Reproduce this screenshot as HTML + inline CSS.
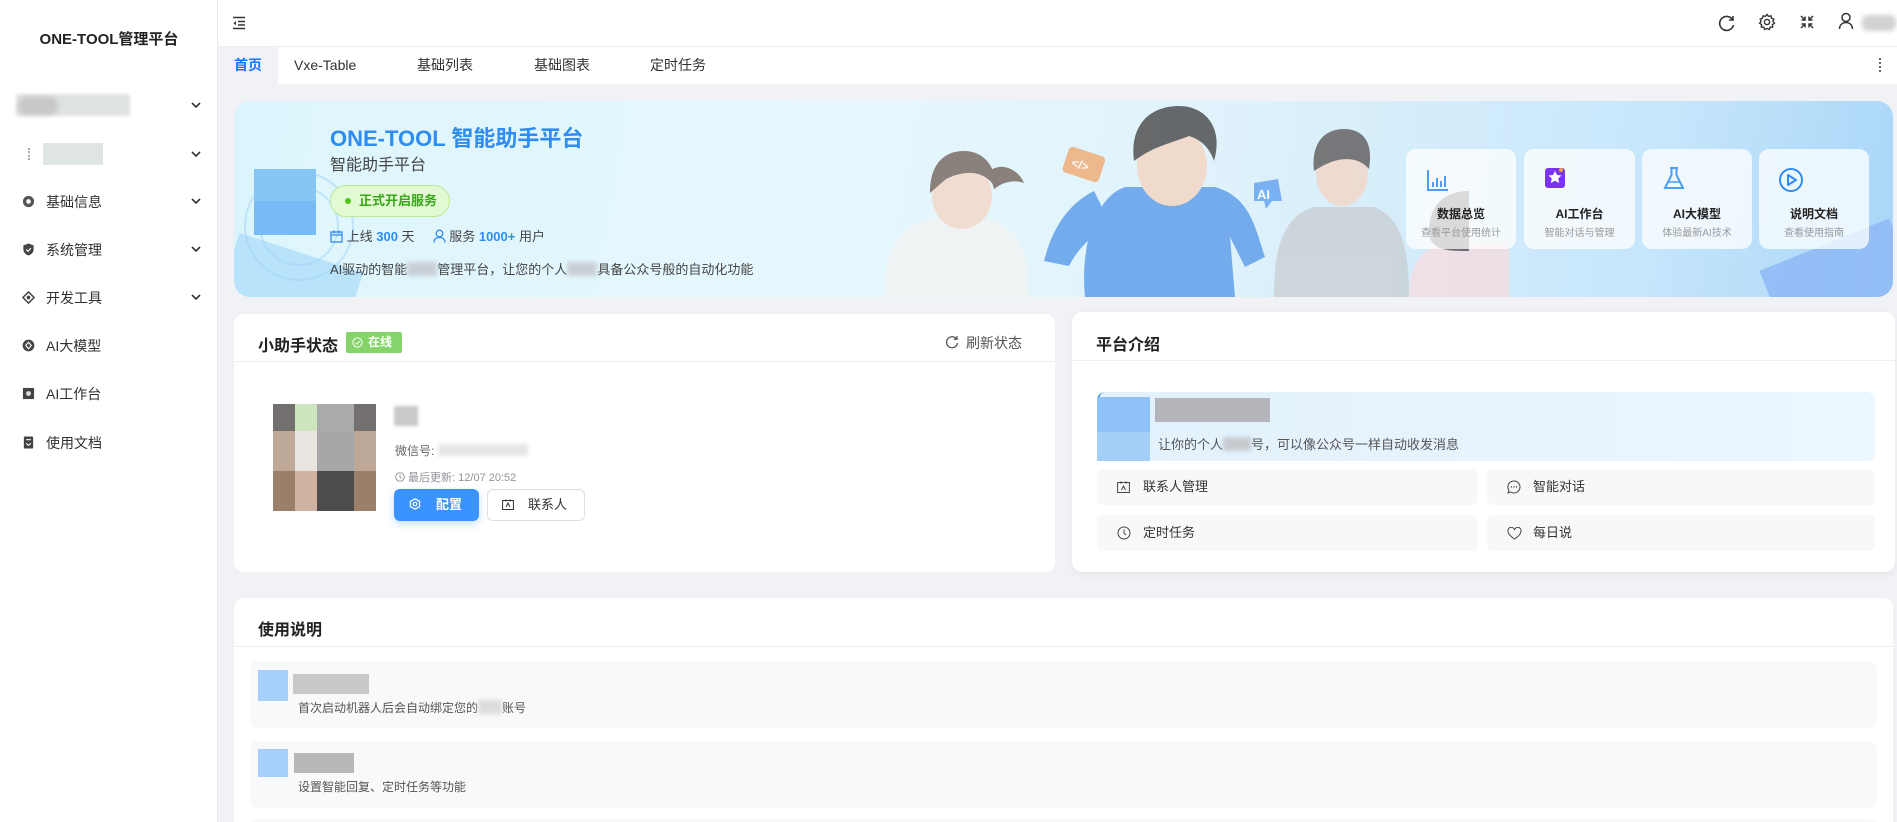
<!DOCTYPE html>
<html style="width:1897px;height:822px;overflow:hidden"><head><meta charset="utf-8">
<style>
*{box-sizing:border-box;margin:0;padding:0}
body{width:1897px;height:822px;overflow:hidden;background:#f0f2f5;font-family:"Liberation Sans","Noto Sans CJK SC",sans-serif;color:#303133;position:relative}
.abs{position:absolute}
.side{left:0;top:0;width:218px;height:822px;background:#fff;border-right:1px solid #e8eaef}
.logo{left:0;top:28px;width:218px;text-align:center;font-size:15px;font-weight:bold;color:#222}
.mi{left:0;width:218px;height:40px;font-size:14px;color:#303133;display:flex;align-items:center}
.mi .ic{position:absolute;left:22px;top:13px;width:13px;height:13px}
.mi .tx{position:absolute;left:46px}
.mi .ch{position:absolute;left:190px;top:14px}
.hdr{left:218px;top:0;right:0;height:47px;background:#fff;border-bottom:1px solid #eceef2}
.tabs{left:218px;top:47px;right:0;height:37px;background:#fff}
.tab{top:0;height:37px;line-height:37px;font-size:14px;color:#303133}
.card{background:#fff;border-radius:10px}
</style></head><body>
<!-- sidebar -->
<div class="abs side">
 <div class="abs logo">ONE-TOOL管理平台</div>
 <div class="abs" style="left:16px;top:94px;width:114px;height:22px;background:#dfe3e0;filter:blur(1.5px)"></div>
 <div class="abs" style="left:18px;top:97px;width:40px;height:18px;background:#c8c8c8;border-radius:8px;filter:blur(2px)"></div>
 <svg class="abs" style="left:190px;top:100px" width="12" height="10"><path d="M2 3l4 4 4-4" stroke="#333" stroke-width="1.6" fill="none"/></svg>
 <div class="abs" style="left:28px;top:148px;width:2px;height:12px;border-left:2px dotted #aaa"></div>
 <div class="abs" style="left:43px;top:143px;width:60px;height:22px;background:#dfe5e1"></div>
 <svg class="abs" style="left:190px;top:149px" width="12" height="10"><path d="M2 3l4 4 4-4" stroke="#333" stroke-width="1.6" fill="none"/></svg>

 <div class="abs mi" style="top:182px"><svg class="ic" viewBox="0 0 14 14"><circle cx="7" cy="7" r="6" fill="#555"/><circle cx="7" cy="7" r="2.5" fill="#fff"/></svg><span class="tx">基础信息</span><svg class="ch" width="12" height="10"><path d="M2 3l4 4 4-4" stroke="#333" stroke-width="1.6" fill="none"/></svg></div>
 <div class="abs mi" style="top:230px"><svg class="ic" viewBox="0 0 14 14"><path d="M7 0.5L12.5 2.5V7C12.5 10 10 12.5 7 13.5 4 12.5 1.5 10 1.5 7V2.5Z" fill="#444"/><path d="M4.5 7l2 2 3-3.5" stroke="#fff" stroke-width="1.3" fill="none"/></svg><span class="tx">系统管理</span><svg class="ch" width="12" height="10"><path d="M2 3l4 4 4-4" stroke="#333" stroke-width="1.6" fill="none"/></svg></div>
 <div class="abs mi" style="top:278px"><svg class="ic" viewBox="0 0 14 14"><path d="M7 1L13 7 7 13 1 7Z" stroke="#444" stroke-width="1.6" fill="none"/><circle cx="7" cy="7" r="2" fill="#444"/></svg><span class="tx">开发工具</span><svg class="ch" width="12" height="10"><path d="M2 3l4 4 4-4" stroke="#333" stroke-width="1.6" fill="none"/></svg></div>
 <div class="abs mi" style="top:326px"><svg class="ic" viewBox="0 0 14 14"><circle cx="7" cy="7" r="6.3" fill="#444"/><path d="M7 3.5L10 7 7 10.5 4 7Z" stroke="#fff" stroke-width="1.2" fill="none"/></svg><span class="tx">AI大模型</span></div>
 <div class="abs mi" style="top:374px"><svg class="ic" viewBox="0 0 14 14"><rect x="1" y="1" width="12" height="12" fill="#444"/><circle cx="7" cy="7" r="2.6" fill="#ddd"/></svg><span class="tx">AI工作台</span></div>
 <div class="abs mi" style="top:423px"><svg class="ic" viewBox="0 0 14 14"><rect x="2" y="0.5" width="10" height="13" rx="1" fill="#444"/><path d="M4.5 8l2.5 2 2.5-2M4.5 4h5" stroke="#fff" stroke-width="1.2" fill="none"/></svg><span class="tx">使用文档</span></div>
</div>

<!-- header -->
<div class="abs hdr">
 <svg class="abs" style="left:14px;top:16px" width="14" height="14" viewBox="0 0 14 14"><path d="M1 1.5h12M6 5.5h7M6 9h7M1 12.5h12" stroke="#333" stroke-width="1.5"/><path d="M4 5L1.5 7.2 4 9.4Z" fill="#333"/></svg>
 <svg class="abs" style="left:1500px;top:14px" width="18" height="18" viewBox="0 0 18 18"><path d="M14.5 5.5A7 7 0 1 0 15.5 11" stroke="#333" stroke-width="1.6" fill="none"/><path d="M15 2v4h-4" stroke="#333" stroke-width="1.6" fill="none"/></svg>
 <svg class="abs" style="left:1540px;top:13px" width="18" height="18" viewBox="0 0 18 18"><path d="M9 1.5l1.6 1.9 2.4-.6.5 2.4 2.3.9-.9 2.3 1.5 1.9-2 1.3.3 2.5-2.5.1-.9 2.3-2.3-1-2.3 1-.9-2.3-2.5-.1.3-2.5-2-1.3 1.5-1.900-.9-2.3 2.3-.9.5-2.4 2.4.6Z" stroke="#333" stroke-width="1.4" fill="none"/><circle cx="9" cy="9" r="2.6" stroke="#333" stroke-width="1.4" fill="none"/></svg>
 <svg class="abs" style="left:1582px;top:15px" width="14" height="14" viewBox="0 0 14 14"><path d="M1 1l4 4M5 1.5V5H1.5M13 1l-4 4M9 1.5V5h3.5M1 13l4-4M5 12.5V9H1.5M13 13l-4-4M9 12.5V9h3.5" stroke="#333" stroke-width="1.5" fill="none"/></svg>
 <svg class="abs" style="left:1620px;top:12px" width="16" height="18" viewBox="0 0 16 18"><circle cx="8" cy="5.5" r="4" stroke="#333" stroke-width="1.5" fill="none"/><path d="M1.5 17c0-4 3-6.5 6.5-6.5s6.5 2.5 6.5 6.5" stroke="#333" stroke-width="1.5" fill="none"/></svg>
 <div class="abs" style="left:1644px;top:15px;width:34px;height:16px;background:#d2d2d2;border-radius:6px;filter:blur(2px)"></div>
</div>

<!-- tabs -->
<div class="abs tabs">
 <div class="abs tab" style="left:0;width:60px;background:#f0f2f5;color:#1677ff;font-weight:bold;text-align:center">首页</div>
 <div class="abs tab" style="left:76px">Vxe-Table</div>
 <div class="abs tab" style="left:199px">基础列表</div>
 <div class="abs tab" style="left:316px">基础图表</div>
 <div class="abs tab" style="left:432px">定时任务</div>
 <div class="abs" style="left:1661px;top:11px;width:2px;height:14px;border-left:2px dotted #666"></div>
</div>

<!-- banner -->
<div class="abs" style="left:234px;top:101px;width:1659px;height:196px;border-radius:16px;overflow:hidden;background:linear-gradient(100deg,#dcf5fc 0%,#e6f8fd 35%,#dff2fb 60%,#c6e6fb 85%,#a9d6f8 100%)">
 <div class="abs" style="left:-10px;top:150px;width:130px;height:80px;background:#a8dcf9;transform:rotate(18deg);opacity:.7"></div>
 <div class="abs" style="right:-20px;top:140px;width:140px;height:100px;background:#8db6f6;transform:rotate(-22deg);opacity:.8"></div>
 <div class="abs" style="left:10px;top:70px;width:110px;height:110px;border-radius:50%;border:2px solid rgba(160,210,245,.5)"></div>
 <div class="abs" style="left:25px;top:85px;width:80px;height:80px;border-radius:50%;border:2px solid rgba(160,210,245,.5)"></div>
 <div class="abs" style="left:20px;top:68px;width:62px;height:66px;background:#78baf5"></div>
 <div class="abs" style="left:20px;top:68px;width:62px;height:32px;background:#85c6f5"></div>
 <div class="abs" style="left:96px;top:20px;font-size:22px;font-weight:bold;color:#2f8cf0">ONE-TOOL 智能助手平台</div>
 <div class="abs" style="left:96px;top:50px;font-size:16px;color:#444">智能助手平台</div>
 <div class="abs" style="left:96px;top:84px;width:120px;height:32px;border-radius:16px;background:#e3f9d4;border:1px solid #b9eb95;font-size:13px;font-weight:bold;color:#3aa619;line-height:30px;padding-left:28px">正式开启服务<span class="abs" style="left:14px;top:12px;width:6px;height:6px;border-radius:50%;background:#52c41a"></span></div>
 <div class="abs" style="left:96px;top:125px;font-size:13px;color:#444;white-space:nowrap">
  <svg width="13" height="13" viewBox="0 0 13 13" style="vertical-align:-2px"><rect x="1" y="2" width="11" height="10" stroke="#2f8cf0" stroke-width="1.3" fill="none"/><path d="M1 5h11M4 0.5v3M9 0.5v3" stroke="#2f8cf0" stroke-width="1.3"/></svg> 上线 <b style="color:#2f8cf0">300</b> 天 &nbsp;&nbsp;&nbsp;
  <svg width="13" height="14" viewBox="0 0 13 14" style="vertical-align:-2px"><circle cx="6.5" cy="4.5" r="3.3" stroke="#2f8cf0" stroke-width="1.3" fill="none"/><path d="M1 13.5c0-3.5 2.5-5 5.5-5s5.5 1.5 5.5 5" stroke="#2f8cf0" stroke-width="1.3" fill="none"/></svg> 服务 <b style="color:#2f8cf0">1000+</b> 用户</div>
 <div class="abs" style="left:96px;top:158px;font-size:13px;color:#444;white-space:nowrap">AI驱动的智能<span style="display:inline-block;width:30px;height:14px;background:#c8d0d6;filter:blur(2px);vertical-align:-2px"></span>管理平台，让您的个人<span style="display:inline-block;width:30px;height:14px;background:#c8d0d6;filter:blur(2px);vertical-align:-2px"></span>具备公众号般的自动化功能</div>
 <!-- characters -->
 <svg class="abs" style="left:620px;top:0" width="680" height="196" viewBox="0 0 680 196">
  <g opacity=".75">
  <path d="M30 196c0-40 10-70 50-80h50c40 10 45 40 45 80Z" fill="#f3f3f1"/>
  <ellipse cx="108" cy="95" rx="30" ry="33" fill="#f5d4c3"/>
  <path d="M76 92c0-30 15-42 34-42s32 14 32 38c-8-15-25-22-50-10Z" fill="#6b5a50"/>
  <path d="M135 70c15-10 30 0 35 12-12-4-22 0-30 6Z" fill="#6b5a50"/>
  <path d="M231 196c-5-50 10-100 40-110h90c35 10 40 40 50 70l-20 10-15-30 5 60Z" fill="#4f94e8"/>
  <path d="M190 160c10-40 30-60 50-70l15 30c-15 15-30 25-40 45Z" fill="#4f94e8"/>
  <ellipse cx="318" cy="65" rx="35" ry="40" fill="#f5d2bd"/>
  <path d="M280 60c-5-40 20-55 45-55s45 20 35 55c-5-15-15-22-25-25-20 8-35 10-55 25Z" fill="#3d3a3a"/>
  <rect x="211" y="50" width="38" height="27" rx="4" fill="#f2a468" transform="rotate(18 230 63)"/>
  <text x="218" y="69" font-size="12" fill="#fff" font-family="Liberation Sans" font-weight="bold" transform="rotate(18 230 63)">&lt;/&gt;</text>
  <path d="M420 196c0-40 5-80 40-90h60c30 10 35 50 35 90Z" fill="#c9cdd2"/>
  <ellipse cx="488" cy="73" rx="26" ry="32" fill="#f5d4c3"/>
  <path d="M460 70c-3-30 12-42 30-42s30 12 25 40c-10-12-30-15-55 2Z" fill="#555050"/>
  <path d="M400 82l24-4 4 22-10 0-6 8-2-8-10 0Z" fill="#5a9cf0"/>
  <text x="403" y="98" font-size="13" fill="#fff" font-family="Liberation Sans" font-weight="bold">AI</text>
  <path d="M555 196c0-30 10-50 40-55h60v55Z" fill="#f8dce0"/>
  <path d="M575 130c0-25 15-40 40-40v60c-20 0-40 0-40-20Z" fill="#4a4545"/>
  </g>
 </svg>
 <!-- tiles -->
 <div class="abs card" style="left:1172px;top:48px;width:110px;height:100px;background:rgba(255,255,255,.75);border-radius:10px"></div>
 <div class="abs card" style="left:1290px;top:48px;width:111px;height:100px;background:rgba(255,255,255,.75);border-radius:10px"></div>
 <div class="abs card" style="left:1408px;top:48px;width:110px;height:100px;background:rgba(255,255,255,.75);border-radius:10px"></div>
 <div class="abs card" style="left:1525px;top:48px;width:110px;height:100px;background:rgba(255,255,255,.75);border-radius:10px"></div>
 <svg class="abs" style="left:1192px;top:67px" width="24" height="24" viewBox="0 0 24 24"><path d="M2 2v20h20" stroke="#4a9ff5" stroke-width="2" fill="none"/><path d="M7 19v-5M11 19v-9M15 19v-6M19 19v-11" stroke="#4a9ff5" stroke-width="2"/></svg>
 <svg class="abs" style="left:1310px;top:66px" width="22" height="22" viewBox="0 0 22 22"><rect x="1" y="1" width="20" height="20" rx="3" fill="#7b35f0"/><path d="M11 4l2 4 4.5.5-3.3 3 1 4.5-4.2-2.3-4.2 2.3 1-4.5-3.3-3L9 8Z" fill="#fff"/><circle cx="17" cy="3" r="2" fill="#f0a040"/></svg>
 <svg class="abs" style="left:1428px;top:65px" width="24" height="25" viewBox="0 0 24 25"><path d="M8 2h8M9.5 2v7L3 22h18L14.5 9V2" stroke="#4a9ff5" stroke-width="2" fill="none"/><path d="M6 16h12" stroke="#4a9ff5" stroke-width="1.6"/></svg>
 <svg class="abs" style="left:1544px;top:66px" width="26" height="26" viewBox="0 0 26 26"><circle cx="13" cy="13" r="11" stroke="#2f8cf0" stroke-width="2" fill="none"/><path d="M10 8v10l8-5Z" stroke="#2f8cf0" stroke-width="2" fill="none" stroke-linejoin="round"/></svg>
 <div class="abs" style="left:1172px;top:104px;width:110px;text-align:center;font-size:12px;font-weight:bold;color:#222">数据总览</div>
 <div class="abs" style="left:1290px;top:104px;width:111px;text-align:center;font-size:12px;font-weight:bold;color:#222">AI工作台</div>
 <div class="abs" style="left:1408px;top:104px;width:110px;text-align:center;font-size:12px;font-weight:bold;color:#222">AI大模型</div>
 <div class="abs" style="left:1525px;top:104px;width:110px;text-align:center;font-size:12px;font-weight:bold;color:#222">说明文档</div>
 <div class="abs" style="left:1172px;top:123px;width:110px;text-align:center;font-size:10px;color:#999">查看平台使用统计</div>
 <div class="abs" style="left:1290px;top:123px;width:111px;text-align:center;font-size:10px;color:#999">智能对话与管理</div>
 <div class="abs" style="left:1408px;top:123px;width:110px;text-align:center;font-size:10px;color:#999">体验最新AI技术</div>
 <div class="abs" style="left:1525px;top:123px;width:110px;text-align:center;font-size:10px;color:#999">查看使用指南</div>
</div>

<!-- left card -->
<div class="abs card" style="left:234px;top:314px;width:821px;height:258px">
 <div class="abs" style="left:0;top:47px;width:100%;border-top:1px solid #eceef2"></div>
 <div class="abs" style="left:24px;top:18px;font-size:16px;font-weight:bold;color:#222">小助手状态</div>
 <div class="abs" style="left:112px;top:18px;width:56px;height:21px;background:#85d46b;border-radius:2px;color:#fff;font-size:12px;font-weight:bold;line-height:21px;padding-left:22px">在线<svg class="abs" style="left:6px;top:5px" width="11" height="11" viewBox="0 0 11 11"><circle cx="5.5" cy="5.5" r="4.6" stroke="#fff" stroke-width="1" fill="none"/><path d="M3.3 5.6l1.6 1.5 2.8-2.9" stroke="#fff" stroke-width="1" fill="none"/></svg></div>
 <svg class="abs" style="left:711px;top:21px" width="14" height="14" viewBox="0 0 14 14"><path d="M11.5 4A5.5 5.5 0 1 0 12.5 8" stroke="#555" stroke-width="1.3" fill="none"/><path d="M12 1v3.2H8.8" stroke="#555" stroke-width="1.3" fill="none"/></svg>
 <div class="abs" style="left:732px;top:19px;font-size:14px;color:#555">刷新状态</div>
 <div class="abs" style="left:39px;top:90px;width:103px;height:107px;display:grid;grid-template-columns:15fr 15fr 25fr 15fr;grid-template-rows:27fr 40fr 40fr">
  <div style="background:#747070"></div><div style="background:#cde6bf"></div><div style="background:#a9aaac"></div><div style="background:#747070"></div>
  <div style="background:#bea998"></div><div style="background:#e9e5e1"></div><div style="background:#a7a7a7"></div><div style="background:#bea998"></div>
  <div style="background:#9c7f69"></div><div style="background:#d0b3a0"></div><div style="background:#4d4b4e"></div><div style="background:#9c7f69"></div>
 </div>
 <div class="abs" style="left:160px;top:92px;width:24px;height:20px;background:#c9c9c9;filter:blur(1.5px)"></div>
 <div class="abs" style="left:161px;top:128px;font-size:12px;color:#666;white-space:nowrap">微信号: <span style="display:inline-block;width:90px;height:12px;background:#e6e6e6;filter:blur(2px);vertical-align:-1px"></span></div>
 <div class="abs" style="left:161px;top:155px;font-size:11px;color:#909399;white-space:nowrap"><svg width="10" height="10" viewBox="0 0 10 10" style="vertical-align:-1px"><circle cx="5" cy="5" r="4.3" stroke="#999" fill="none"/><path d="M5 2.5V5l1.5 1.5" stroke="#999" fill="none"/></svg> 最后更新: 12/07 20:52</div>
 <div class="abs" style="left:160px;top:175px;width:85px;height:32px;background:#3a93ff;border-radius:6px;color:#fff;font-size:13px;font-weight:bold;line-height:32px;padding-left:42px;box-shadow:0 3px 8px rgba(58,147,255,.3)">配置<svg class="abs" style="left:15px;top:9px" width="12" height="13" viewBox="0 0 12 13"><path d="M6 .8l4.6 2.6v5.2L6 11.2 1.4 8.6V3.4Z" stroke="#fff" stroke-width="1.2" fill="none"/><circle cx="6" cy="6" r="1.8" stroke="#fff" stroke-width="1.2" fill="none"/></svg></div>
 <div class="abs" style="left:253px;top:175px;width:98px;height:32px;border:1px solid #dcdfe6;border-radius:6px;color:#333;font-size:13px;line-height:30px;padding-left:40px">联系人<svg class="abs" style="left:14px;top:9px" width="12" height="11" viewBox="0 0 12 11"><rect x=".6" y="1.5" width="10.8" height="9" stroke="#333" fill="none"/><path d="M4 .5v2M8 .5v2M4 8l2-4 2 4" stroke="#333" fill="none"/></svg></div>
</div>

<!-- right card -->
<div class="abs card" style="left:1072px;top:312px;width:823px;height:260px;box-shadow:0 2px 8px rgba(0,0,0,.06)">
 <div class="abs" style="left:0;top:48px;width:100%;border-top:1px solid #eceef2"></div>
 <div class="abs" style="left:24px;top:19px;font-size:16px;font-weight:bold;color:#222">平台介绍</div>
 <div class="abs" style="left:25px;top:80px;width:778px;height:69px;border-radius:8px;background:linear-gradient(90deg,#e2f1fc,#ecf6fe);border-left:2px solid #2f8cf0"></div>
 <div class="abs" style="left:25px;top:85px;width:53px;height:64px;background:#8fc2f7"></div>
 <div class="abs" style="left:25px;top:120px;width:53px;height:29px;background:#a3cff9"></div>
 <div class="abs" style="left:83px;top:86px;width:115px;height:24px;background:#b3b5ba"></div>
 <div class="abs" style="left:86px;top:122px;font-size:13px;color:#555;white-space:nowrap">让你的个人<span style="display:inline-block;width:28px;height:14px;background:#c6cbd0;filter:blur(2px);vertical-align:-2px"></span>号，可以像公众号一样自动收发消息</div>
 <div class="abs" style="left:25px;top:157px;width:381px;height:36px;background:#f7f8fa;border-radius:6px;font-size:13px;color:#333;line-height:36px;padding-left:46px">联系人管理<svg class="abs" style="left:20px;top:12px" width="13" height="12" viewBox="0 0 13 12"><rect x=".6" y="1.5" width="11.8" height="10" stroke="#444" fill="none"/><path d="M4 .3v2.5M9 .3v2.5M4.5 9l2-4 2 4" stroke="#444" fill="none"/></svg></div>
 <div class="abs" style="left:415px;top:157px;width:388px;height:36px;background:#f7f8fa;border-radius:6px;font-size:13px;color:#333;line-height:36px;padding-left:46px">智能对话<svg class="abs" style="left:20px;top:11px" width="14" height="14" viewBox="0 0 14 14"><path d="M7 1a6 6 0 1 1-3.5 10.9L1 13l.9-2.7A6 6 0 0 1 7 1Z" stroke="#444" fill="none"/><circle cx="4.5" cy="7" r=".7" fill="#444"/><circle cx="7" cy="7" r=".7" fill="#444"/><circle cx="9.5" cy="7" r=".7" fill="#444"/></svg></div>
 <div class="abs" style="left:25px;top:203px;width:381px;height:36px;background:#f7f8fa;border-radius:6px;font-size:13px;color:#333;line-height:36px;padding-left:46px">定时任务<svg class="abs" style="left:20px;top:11px" width="14" height="14" viewBox="0 0 14 14"><circle cx="7" cy="7" r="6" stroke="#444" fill="none"/><path d="M7 3.5V7l2 2" stroke="#444" fill="none"/></svg></div>
 <div class="abs" style="left:415px;top:203px;width:388px;height:36px;background:#f7f8fa;border-radius:6px;font-size:13px;color:#333;line-height:36px;padding-left:46px">每日说<svg class="abs" style="left:20px;top:12px" width="15" height="13" viewBox="0 0 15 13"><path d="M7.5 12S1 8 1 4.2A3.2 3.2 0 0 1 7.5 3a3.2 3.2 0 0 1 6.5 1.2C14 8 7.5 12 7.5 12Z" stroke="#444" fill="none"/></svg></div>
</div>

<!-- usage card -->
<div class="abs card" style="left:234px;top:598px;width:1659px;height:224px;overflow:hidden;border-radius:10px 10px 0 0">
 <div class="abs" style="left:0;top:48px;width:100%;border-top:1px solid #eceef2"></div>
 <div class="abs" style="left:24px;top:18px;font-size:16px;font-weight:bold;color:#222">使用说明</div>
 <div class="abs" style="left:16px;top:63px;width:1627px;height:67px;background:#f8f9fb;border-radius:8px"></div>
 <div class="abs" style="left:24px;top:72px;width:30px;height:31px;background:#a5d0fc"></div>
 <div class="abs" style="left:59px;top:76px;width:76px;height:20px;background:#c8c8ca"></div>
 <div class="abs" style="left:64px;top:101px;font-size:12px;color:#555;white-space:nowrap">首次启动机器人后会自动绑定您的<span style="display:inline-block;width:24px;height:14px;background:#ddd;filter:blur(2px);vertical-align:-2px"></span>账号</div>
 <div class="abs" style="left:16px;top:143px;width:1627px;height:67px;background:#f8f9fb;border-radius:8px"></div>
 <div class="abs" style="left:24px;top:151px;width:30px;height:28px;background:#a5d0fc"></div>
 <div class="abs" style="left:60px;top:155px;width:60px;height:20px;background:#b8b8b8"></div>
 <div class="abs" style="left:64px;top:180px;font-size:12px;color:#555;white-space:nowrap">设置智能回复、定时任务等功能</div>
 <div class="abs" style="left:16px;top:221px;width:1627px;height:30px;background:#f8f9fb;border-radius:8px"></div>
</div>
</body></html>
